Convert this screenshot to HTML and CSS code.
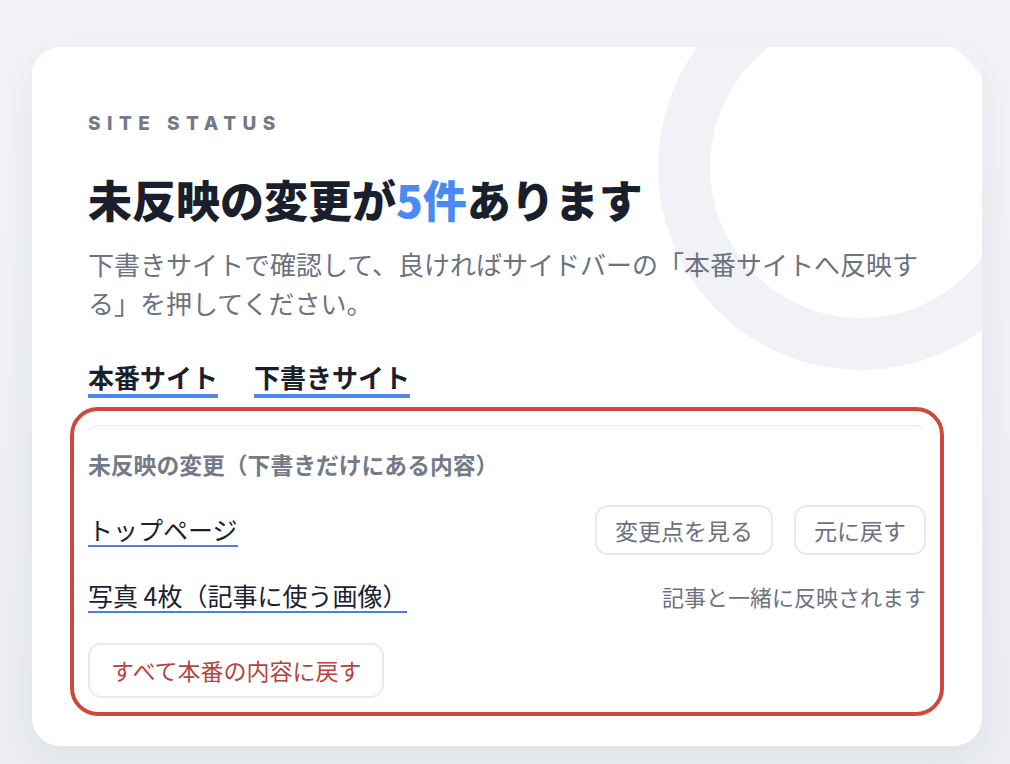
FILE: index.html
```html
<!DOCTYPE html>
<html lang="ja">
<head>
<meta charset="utf-8">
<title>Site status</title>
<link rel="stylesheet" href="styles.css">
</head>
<body>
<section class="card">
  <div class="ring" aria-hidden="true"></div>
  <div class="content">
    <p class="eyebrow">SITE STATUS</p>
    <h1 class="title">未反映の変更が<span class="count">5件</span>あります</h1>
    <p class="lead">下書きサイトで確認して、良ければサイドバーの「本番サイトへ反映する」を押してください。</p>
    <nav class="tabs">
      <a class="tab">本番サイト</a>
      <a class="tab">下書きサイト</a>
    </nav>
    <div class="panel">
      <h2 class="panel-title">未反映の変更（下書きだけにある内容）</h2>
      <div class="row">
        <a class="item">トップページ</a>
        <div class="actions">
          <button class="btn">変更点を見る</button>
          <button class="btn">元に戻す</button>
        </div>
      </div>
      <div class="row row-second">
        <a class="item">写真 4枚（記事に使う画像）</a>
        <span class="note">記事と一緒に反映されます</span>
      </div>
      <button class="btn btn-danger">すべて本番の内容に戻す</button>
    </div>
  </div>
</section>
</body>
</html>
```
FILE: styles.css
```css
* { box-sizing: border-box; }

html, body { height: 100%; }

body {
  margin: 0;
  padding: 47px 28px 0 32px;
  background: linear-gradient(180deg, #f3f4f7 0%, #eceef2 100%);
  font-family: "Noto Sans CJK JP", "Noto Sans", sans-serif;
  color: #1b2130;
}

.card {
  position: relative;
  overflow: hidden;
  width: 950px;
  background: #ffffff;
  border-radius: 28px;
  box-shadow: 0 12px 40px rgba(30, 40, 70, 0.07);
}

.ring {
  position: absolute;
  left: 626px;
  top: -83px;
  width: 406px;
  height: 406px;
  border-radius: 50%;
  border: 52px solid #f1f2f6;
  z-index: 0;
}

.content {
  position: relative;
  z-index: 1;
  padding: 67px 56px 48px 56px;
}

.eyebrow {
  margin: 0;
  font-family: "Inter", "Noto Sans", sans-serif;
  font-weight: 800;
  font-size: 19px;
  line-height: 20px;
  letter-spacing: 6.5px;
  color: #737985;
}

.title {
  margin: 37px 0 0;
  font-size: 44px;
  line-height: 56px;
  font-weight: 900;
  color: #1a1f2d;
}

.count { color: #4a8bf3; }

.lead {
  margin: 17px 0 0;
  font-size: 26px;
  line-height: 39px;
  color: #6c7280;
}

.tabs {
  display: flex;
  gap: 36px;
  margin-top: 38px;
}

.tab {
  font-size: 26px;
  line-height: 34px;
  font-weight: 700;
  color: #1a1f2d;
  border-bottom: 4px solid #4a88ea;
}

.panel {
  margin-top: 27px;
  border-top: 1px solid #e6e8ec;
  border-radius: 10px;
  outline: 4px solid #d0483b;
  outline-offset: 14px;
  padding-top: 24px;
}

.panel-title {
  margin: 0;
  font-size: 22.8px;
  line-height: 30px;
  font-weight: 700;
  color: #747a88;
}

.row {
  display: flex;
  align-items: center;
  justify-content: space-between;
  margin-top: 25px;
}

.row-second { margin-top: 24px; }

.item {
  font-size: 25px;
  line-height: 32px;
  color: #1b2130;
  border-bottom: 2px solid #4a80d8;
}

.actions {
  display: flex;
  gap: 21px;
}

.btn {
  font-family: "Noto Sans CJK JP", "Noto Sans", sans-serif;
  font-size: 23px;
  line-height: 30px;
  color: #6c7280;
  background: #ffffff;
  border: 2px solid #e8eaee;
  border-radius: 13px;
  padding: 8px 18px;
}

.note {
  font-size: 22px;
  line-height: 32px;
  color: #6c7280;
}

.btn-danger {
  margin-top: 30px;
  padding: 10px 21px 11px;
  color: #b4453a;
}
```
